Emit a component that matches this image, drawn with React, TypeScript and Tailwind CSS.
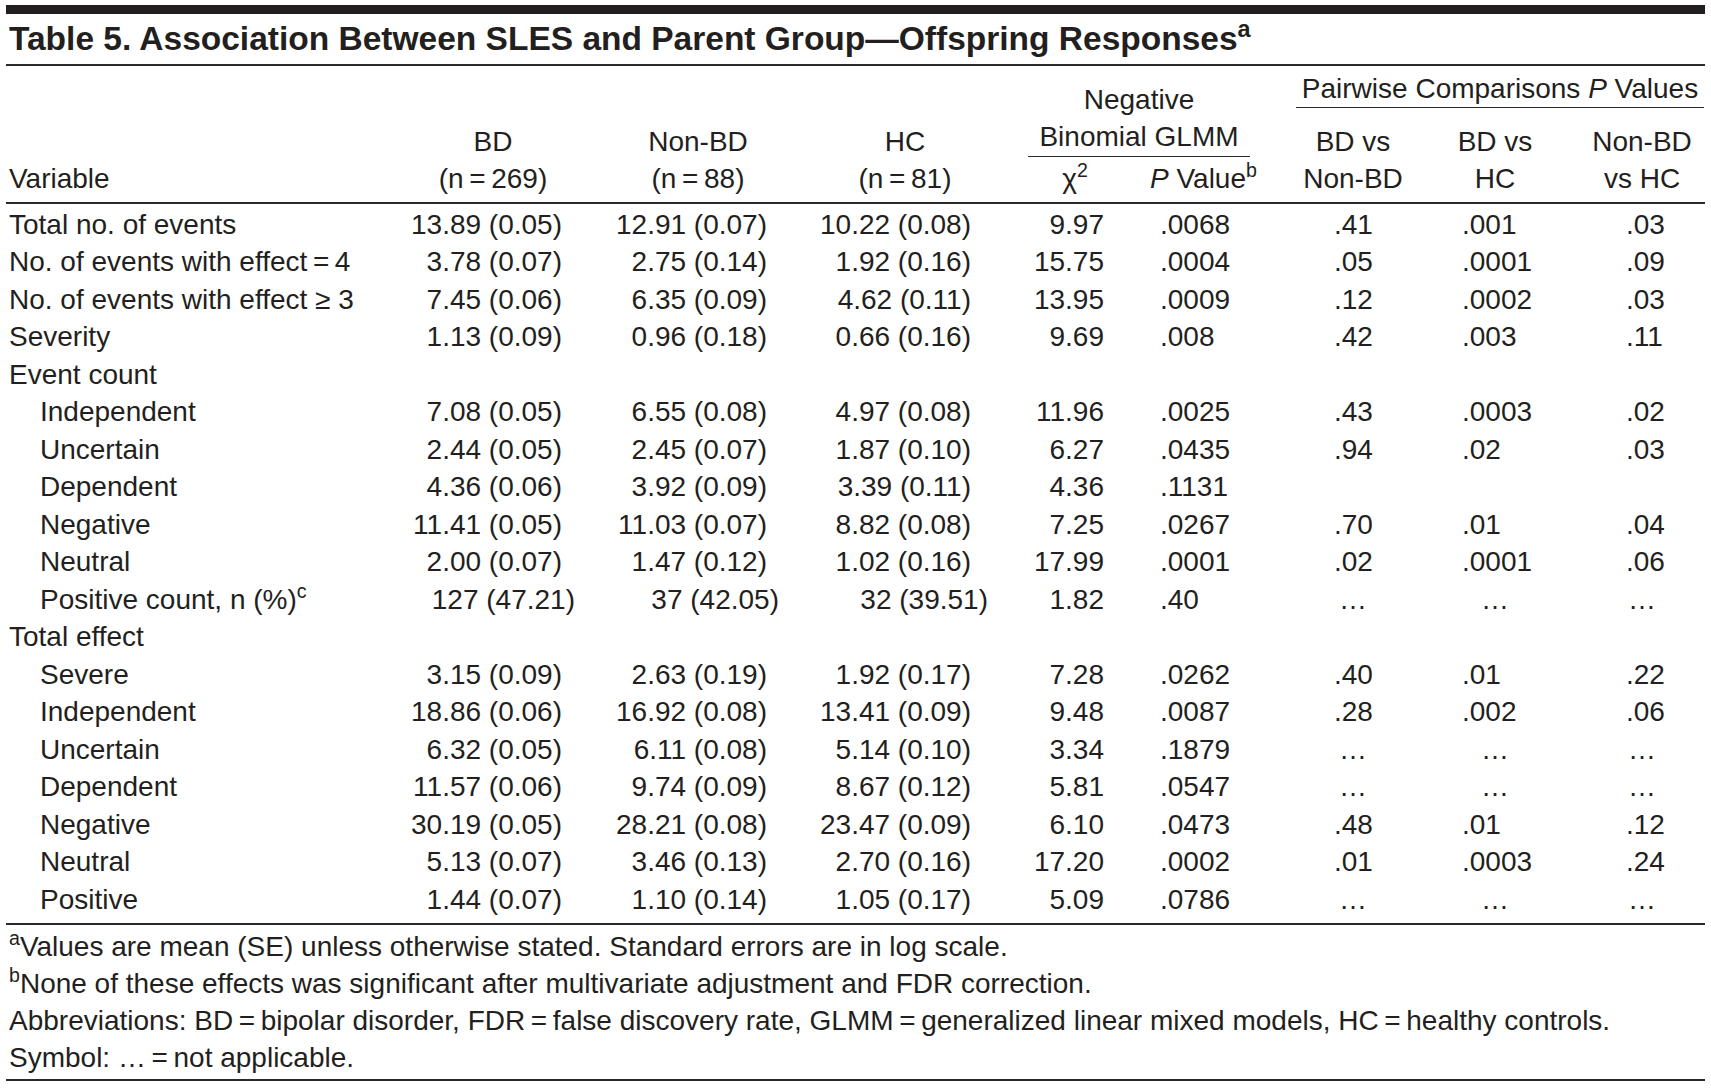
import React from 'react';

// One row of the table: label, then 8 values (3 group means, chi2, P, 3 pairwise)
interface DataRow {
  label: string;
  sup?: string;
  indent?: boolean;
  values?: string[];
  wide?: boolean;
}

const E = '\u2026';

const rows: DataRow[] = [
  { label: 'Total no. of events', values: ['13.89 (0.05)', '12.91 (0.07)', '10.22 (0.08)', '9.97', '.0068', '.41', '.001', '.03'] },
  { label: 'No. of events with effect\u2009=\u20094', values: ['3.78 (0.07)', '2.75 (0.14)', '1.92 (0.16)', '15.75', '.0004', '.05', '.0001', '.09'] },
  { label: 'No. of events with effect \u2265 3', values: ['7.45 (0.06)', '6.35 (0.09)', '4.62 (0.11)', '13.95', '.0009', '.12', '.0002', '.03'] },
  { label: 'Severity', values: ['1.13 (0.09)', '0.96 (0.18)', '0.66 (0.16)', '9.69', '.008', '.42', '.003', '.11'] },
  { label: 'Event count' },
  { label: 'Independent', indent: true, values: ['7.08 (0.05)', '6.55 (0.08)', '4.97 (0.08)', '11.96', '.0025', '.43', '.0003', '.02'] },
  { label: 'Uncertain', indent: true, values: ['2.44 (0.05)', '2.45 (0.07)', '1.87 (0.10)', '6.27', '.0435', '.94', '.02', '.03'] },
  { label: 'Dependent', indent: true, values: ['4.36 (0.06)', '3.92 (0.09)', '3.39 (0.11)', '4.36', '.1131', '', '', ''] },
  { label: 'Negative', indent: true, values: ['11.41 (0.05)', '11.03 (0.07)', '8.82 (0.08)', '7.25', '.0267', '.70', '.01', '.04'] },
  { label: 'Neutral', indent: true, values: ['2.00 (0.07)', '1.47 (0.12)', '1.02 (0.16)', '17.99', '.0001', '.02', '.0001', '.06'] },
  { label: 'Positive count, n (%)', sup: 'c', indent: true, wide: true, values: ['127 (47.21)', '37 (42.05)', '32 (39.51)', '1.82', '.40', E, E, E] },
  { label: 'Total effect' },
  { label: 'Severe', indent: true, values: ['3.15 (0.09)', '2.63 (0.19)', '1.92 (0.17)', '7.28', '.0262', '.40', '.01', '.22'] },
  { label: 'Independent', indent: true, values: ['18.86 (0.06)', '16.92 (0.08)', '13.41 (0.09)', '9.48', '.0087', '.28', '.002', '.06'] },
  { label: 'Uncertain', indent: true, values: ['6.32 (0.05)', '6.11 (0.08)', '5.14 (0.10)', '3.34', '.1879', E, E, E] },
  { label: 'Dependent', indent: true, values: ['11.57 (0.06)', '9.74 (0.09)', '8.67 (0.12)', '5.81', '.0547', E, E, E] },
  { label: 'Negative', indent: true, values: ['30.19 (0.05)', '28.21 (0.08)', '23.47 (0.09)', '6.10', '.0473', '.48', '.01', '.12'] },
  { label: 'Neutral', indent: true, values: ['5.13 (0.07)', '3.46 (0.13)', '2.70 (0.16)', '17.20', '.0002', '.01', '.0003', '.24'] },
  { label: 'Positive', indent: true, values: ['1.44 (0.07)', '1.10 (0.14)', '1.05 (0.17)', '5.09', '.0786', E, E, E] },
];

const Sup = ({ children }: { children: React.ReactNode }) => (
  <sup className="relative -top-[0.55em] align-baseline text-[0.7em]">{children}</sup>
);

// pairwise cell: values sit left, the ellipsis sits centred
const Pw = ({ v, w, pl }: { v: string; w: string; pl: string }) =>
  v === E ? (
    <div className={`${w} text-center`}>{v}</div>
  ) : (
    <div className={`${w} ${pl}`}>{v}</div>
  );

const Row = ({ row }: { row: DataRow }) => {
  const v = row.values;
  return (
    <div className="flex h-[37.5px] items-center whitespace-nowrap">
      <div className={`w-[394px] ${row.indent ? 'pl-[34px]' : 'pl-[3px]'}`}>
        {row.label}
        {row.sup && <Sup>{row.sup}</Sup>}
      </div>
      {v && (
        <>
          <div className={`w-[186px] text-right ${row.wide ? 'pr-[11px]' : 'pr-[24px]'}`}>{v[0]}</div>
          <div className={`w-[224px] text-right ${row.wide ? 'pr-[31px]' : 'pr-[43px]'}`}>{v[1]}</div>
          <div className={`w-[190px] text-right ${row.wide ? 'pr-[12px]' : 'pr-[29px]'}`}>{v[2]}</div>
          <div className="w-[150px] pr-[46px] text-right">{v[3]}</div>
          <div className="w-[100px] pl-[10px]">{v[4]}</div>
          <div className="ml-[46px]">
            <Pw v={v[5]} w="w-[114px]" pl="pl-[38px]" />
          </div>
          <div className="ml-[20px]">
            <Pw v={v[6]} w="w-[130px]" pl="pl-[32px]" />
          </div>
          <div className="ml-[20px]">
            <Pw v={v[7]} w="w-[124px]" pl="pl-[46px]" />
          </div>
        </>
      )}
    </div>
  );
};

const GroupHead = ({ name, n, w }: { name: string; n: string; w: string }) => (
  <div className={`${w} flex flex-col items-center`}>
    <div>{name}</div>
    <div>(n{'\u2009=\u2009'}{n})</div>
  </div>
);

export default function App() {
  return (
    <div className="min-h-screen bg-white font-['Liberation_Sans',Arial,sans-serif] text-[28px] text-[#231f20]">
      <div className="ml-[6px] w-[1699px] pt-[5px]">
        <div className="h-[9px] bg-[#231f20]" />
        <div className="h-[50px] pl-[3px] pt-[5px] text-[33.5px] font-bold leading-[40px]">
          Table 5. Association Between SLES and Parent Group{'\u2014'}Offspring Responses<Sup>a</Sup>
        </div>
        <div className="h-[2px] bg-[#2a2a2a]" />

        {/* column headings */}
        <div className="flex h-[136px] items-end whitespace-nowrap pb-[5px] leading-[37px]">
          <div className="w-[394px] pl-[3px]">Variable</div>
          <GroupHead name="BD" n="269" w="w-[186px]" />
          <GroupHead name="Non-BD" n="88" w="w-[224px]" />
          <GroupHead name="HC" n="81" w="w-[190px]" />
          <div className="flex w-[250px] flex-col">
            <div className="ml-[28px] flex flex-col items-center border-b-[1.5px] border-[#2a2a2a]">
              <div>Negative</div>
              <div className="mb-[1px]">Binomial GLMM</div>
            </div>
            <div className="mt-[3px] flex">
              <div className="w-[150px] text-center">
                {'\u03c7'}
                <Sup>2</Sup>
              </div>
              <div className="w-[100px] text-center">
                <i>P</i> Value<Sup>b</Sup>
              </div>
            </div>
          </div>
          <div className="ml-[46px] flex w-[408px] flex-col">
            <div className="border-b-[1.5px] border-[#2a2a2a] text-center">
              Pairwise Comparisons <i>P</i> Values
            </div>
            <div className="mt-[15px] flex">
              <div className="flex w-[114px] flex-col items-center">
                <div>BD vs</div>
                <div>Non-BD</div>
              </div>
              <div className="ml-[20px] flex w-[130px] flex-col items-center">
                <div>BD vs</div>
                <div>HC</div>
              </div>
              <div className="ml-[20px] flex w-[124px] flex-col items-center">
                <div>Non-BD</div>
                <div>vs HC</div>
              </div>
            </div>
          </div>
        </div>
        <div className="h-[2px] bg-[#2a2a2a]" />

        <div className="pt-[2px]">
          {rows.map((row, i) => (
            <Row key={i} row={row} />
          ))}
        </div>
        <div className="mt-[4px] h-[2px] bg-[#2a2a2a]" />

        {/* footnotes */}
        <div className="pl-[3px] pt-[3px] pb-[3px] leading-[37px]">
          <div>
            <Sup>a</Sup>Values are mean (SE) unless otherwise stated. Standard errors are in log scale.
          </div>
          <div>
            <Sup>b</Sup>None of these effects was significant after multivariate adjustment and FDR correction.
          </div>
          <div>
            Abbreviations: BD{'\u2009=\u2009'}bipolar disorder, FDR{'\u2009=\u2009'}false discovery rate,
            GLMM{'\u2009=\u2009'}generalized linear mixed models, HC{'\u2009=\u2009'}healthy controls.
          </div>
          <div>Symbol: {E}{'\u2009=\u2009'}not applicable.</div>
        </div>
        <div className="h-[2px] bg-[#2a2a2a]" />
      </div>
    </div>
  );
}
